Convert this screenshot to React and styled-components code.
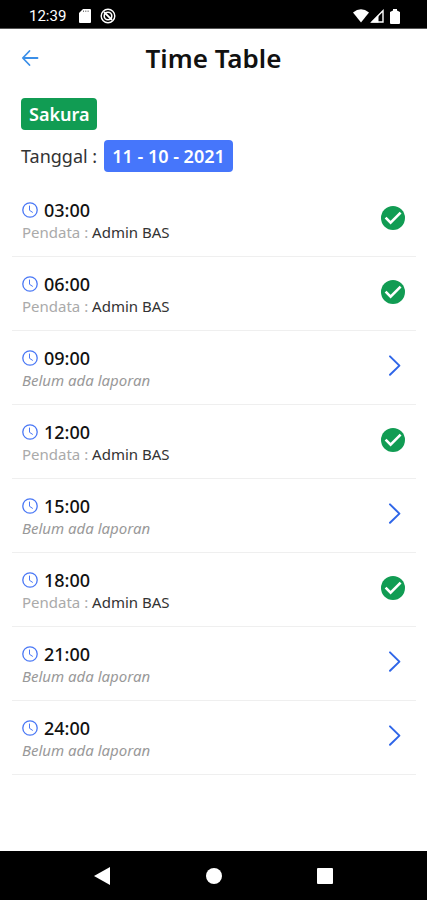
import React, { useState } from 'react';

//css
import styled, { createGlobalStyle } from "styled-components"

// 시간표 데이터 (pendata 가 없으면 아직 보고가 없는 시간)
const initialReports = [
    { time: "03:00", pendata: "Admin BAS" },
    { time: "06:00", pendata: "Admin BAS" },
    { time: "09:00", pendata: null },
    { time: "12:00", pendata: "Admin BAS" },
    { time: "15:00", pendata: null },
    { time: "18:00", pendata: "Admin BAS" },
    { time: "21:00", pendata: null },
    { time: "24:00", pendata: null },
]

const TimeTable = () => {
    const [reports] = useState(initialReports);

    return(
        <Screen>
            <GlobalStyle />

            {/* 상태바 */}
            <StatusBar>
                <StatusGroup>
                    <Clock>12:39</Clock>
                    <svg width="12" height="14" viewBox="0 0 12 14" aria-hidden="true">
                        <path d="M4 0h7q1 0 1 1v12q0 1-1 1H1q-1 0-1-1V4z" fill="#fff" />
                        <path d="M4.5 1.5v1.5M6.8 1.5v1.5M9.1 1.5v1.5" stroke="#777" strokeWidth="1" />
                    </svg>
                    <svg width="16" height="16" viewBox="0 0 16 16" fill="none" stroke="#fff" aria-hidden="true">
                        <circle cx="8" cy="8" r="6.8" strokeWidth="1.4" />
                        <circle cx="8" cy="8" r="3.8" strokeWidth="1.6" />
                        <path d="M4 4l8 8" strokeWidth="1.8" />
                    </svg>
                </StatusGroup>
                <StatusIcons>
                    <svg width="16" height="14" viewBox="0 0 16 14" aria-hidden="true">
                        <path d="M0 3.4Q8-2.8 16 3.4L8 13.5z" fill="#fff" />
                    </svg>
                    <svg width="14" height="14" viewBox="0 0 14 14" aria-hidden="true">
                        <path d="M13 1.8V13H1.8z" fill="none" stroke="#fff" strokeWidth="1.4" />
                        <path d="M1 13.4L8.5 6v7.4z" fill="#fff" />
                    </svg>
                    <BatteryIcon width="10" height="15" viewBox="0 0 10 15" aria-hidden="true">
                        <path d="M3 0h4v1.5l3 1.5v11q0 1-1 1H1q-1 0-1-1V3l3-1.5z" fill="#fff" />
                    </BatteryIcon>
                </StatusIcons>
            </StatusBar>

            {/* 제목 */}
            <Header>
                <IconButton type="button" aria-label="Kembali">
                    <svg width="18" height="18" viewBox="0 0 18 18" fill="none" stroke="#3b8fe8" strokeWidth="1.8" strokeLinecap="round" strokeLinejoin="round">
                        <path d="M8.5 2L1.8 9l6.7 7M2 9h14.5" />
                    </svg>
                </IconButton>
                <Title>Time Table</Title>
            </Header>

            {/* 구역 / 날짜 */}
            <Info>
                <Badge $color="#119c53">Sakura</Badge>
                <DateRow>
                    <span>Tanggal :</span>
                    <Badge $color="#4676fb">11 - 10 - 2021</Badge>
                </DateRow>
            </Info>

            {/* 시간별 보고 목록 */}
            <List>
                {
                    reports.map((item) => {
                        return(
                            <Row key={item.time}>
                                <RowText>
                                    <TimeLine>
                                        <svg width="16" height="16" viewBox="0 0 16 16" fill="none" stroke="#4a78f5" strokeLinecap="round" aria-hidden="true">
                                            <circle cx="8" cy="8" r="7.2" strokeWidth="1.3" />
                                            <path d="M7.5 4v4.3l3 2" strokeWidth="1" />
                                        </svg>
                                        <Time>{item.time}</Time>
                                    </TimeLine>
                                    {
                                        item.pendata?
                                        <Reporter>Pendata : <Name>{item.pendata}</Name></Reporter>
                                        :
                                        <Empty>Belum ada laporan</Empty>
                                    }
                                </RowText>
                                {
                                    item.pendata?
                                    <svg width="24" height="24" viewBox="0 0 24 24" role="img" aria-label="Selesai">
                                        <circle cx="12" cy="12" r="12" fill="#119c53" />
                                        <path d="M4.6 11.6l5 5L19.6 6.6" fill="none" stroke="#fff" strokeWidth="2.6" />
                                    </svg>
                                    :
                                    <IconButton type="button" aria-label={`Buat laporan ${item.time}`}>
                                        <svg width="24" height="24" viewBox="0 0 24 24" fill="none" stroke="#2f66e8" strokeWidth="2" strokeLinecap="round" strokeLinejoin="round">
                                            <path d="M9 2.4l9.4 9.2L9 20.8" />
                                        </svg>
                                    </IconButton>
                                }
                            </Row>
                        )
                    })
                }
            </List>

            {/* 하단 시스템 버튼 */}
            <SystemNav>
                <IconButton type="button" aria-label="Back">
                    <svg width="18" height="18" viewBox="0 0 18 18"><path d="M1 9L17 0v18z" fill="#fff" /></svg>
                </IconButton>
                <IconButton type="button" aria-label="Home">
                    <svg width="18" height="18" viewBox="0 0 18 18"><circle cx="9" cy="9" r="8" fill="#fff" /></svg>
                </IconButton>
                <IconButton type="button" aria-label="Recent">
                    <svg width="18" height="18" viewBox="0 0 18 18"><rect x="1" y="1" width="16" height="16" rx="1" fill="#fff" /></svg>
                </IconButton>
            </SystemNav>
        </Screen>
    )
};

export default TimeTable;


const GlobalStyle = createGlobalStyle`
    * {
        box-sizing: border-box;
        margin: 0;
        padding: 0;
    }
    body {
        background: #fff;
        color: #111;
        font-family: "Noto Sans", "Open Sans", sans-serif;
    }
    svg {
        display: block;
        flex-shrink: 0;
    }
`

const Screen = styled.div`
    min-height: 100vh;
    display: flex;
    flex-direction: column;
`

// ----- 상태바
const StatusBar = styled.div`
    height: 29px;
    padding: 4px 27px 0 29px;
    display: flex;
    align-items: center;
    justify-content: space-between;
    background: #000;
    border-bottom: 1px solid #555;
`
const StatusGroup = styled.div`
    display: flex;
    align-items: center;
    gap: 9px;
`
const StatusIcons = styled.div`
    display: flex;
    align-items: center;
    gap: 1px;
`
const BatteryIcon = styled.svg`
    margin-left: 5px;
`
const Clock = styled.span`
    margin-right: 4px;
    color: #fff;
    font-family: Roboto, sans-serif;
    font-size: 15px;
    line-height: 20px;
`

// ----- 제목
const Header = styled.header`
    height: 58px;
    padding: 0 21px;
    display: grid;
    grid-template-columns: 18px 1fr 18px;
    align-items: center;
`
const IconButton = styled.button`
    border: 0;
    background: none;
    cursor: pointer;
`
const Title = styled.h1`
    font-size: 26px;
    line-height: 32px;
    font-weight: 600;
    text-align: center;
`

// ----- 구역 / 날짜
const Info = styled.section`
    padding: 11px 21px;
    display: flex;
    flex-direction: column;
    align-items: flex-start;
    gap: 10px;
`
const DateRow = styled.div`
    display: flex;
    align-items: center;
    gap: 7px;
    font-size: 18px;
    line-height: 32px;
    color: #333;
`
const Badge = styled.span`
    padding: 0 8px;
    border-radius: 4px;
    background: ${(props) => props.$color};
    color: #fff;
    font-size: 18px;
    line-height: 32px;
    font-weight: 600;
`

// ----- 목록
const List = styled.ul`
    flex: 1;
    padding: 0 11px 0 12px;
    list-style: none;
`
const Row = styled.li`
    height: 74px;
    padding: 0 11px 3px 10px;
    display: flex;
    align-items: center;
    justify-content: space-between;
    border-bottom: 1px solid #efefef;
`
const RowText = styled.div`
    padding-top: 6px;
`
const TimeLine = styled.div`
    display: flex;
    align-items: center;
    gap: 6px;
`
const Time = styled.p`
    font-size: 18px;
    line-height: 22px;
    font-weight: 500;
`
const Reporter = styled.p`
    font-size: 15px;
    line-height: 22px;
    color: #aaa;
`
const Name = styled.span`
    color: #333;
`
const Empty = styled.p`
    font-size: 15px;
    line-height: 22px;
    font-style: italic;
    color: #999;
`

// ----- 하단 시스템 버튼
const SystemNav = styled.nav`
    height: 49px;
    padding: 0 93px;
    display: flex;
    align-items: center;
    justify-content: space-between;
    background: #000;
`
